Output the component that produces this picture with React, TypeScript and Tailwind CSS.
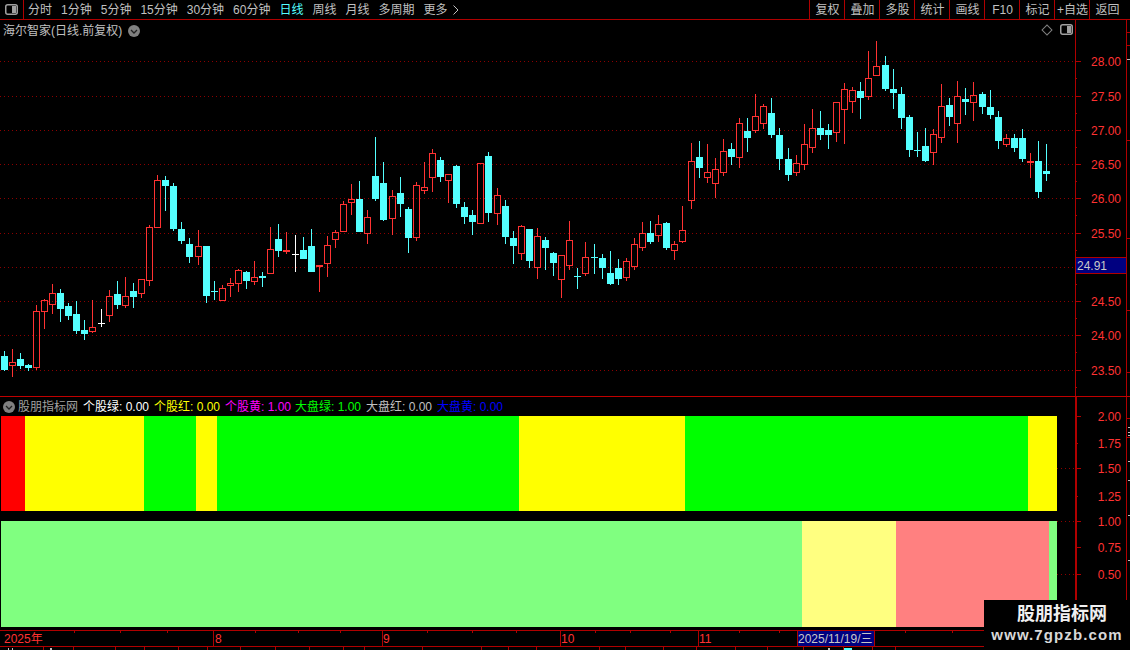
type Candle = [number, number, number, number, number, string];

// x, high, top, bottom, low, colour, all read at 3x from crops of the chart
const groupA: Candle[] = [
  [13, 663, 678, 720, 722, "c"], [37, 657, 697, 707, 741, "r"], [61, 669, 687, 708, 717, "c"], [85, 702, 705, 714, 723, "c"],
  [109, 526, 544, 713, 720, "r"], [133, 507, 511, 545, 597, "r"], [157, 462, 490, 524, 552, "r"], [181, 477, 489, 537, 576, "c"],
  [205, 519, 528, 558, 570, "c"], [229, 513, 552, 603, 612, "c"], [253, 570, 600, 612, 630, "c"], [277, 510, 592, 605, 609, "r"],
  [304, 537, 579, 582, 591, "w"], [328, 480, 499, 557, 576, "r"], [352, 453, 492, 525, 537, "c"], [376, 441, 499, 527, 534, "r"],
  [400, 459, 483, 501, 534, "c"], [424, 447, 448, 491, 504, "r"], [448, 285, 292, 452, 468, "r"], [472, 135, 151, 293, 293, "r"],
  [496, 138, 150, 168, 243, "c"], [520, 159, 168, 297, 303, "c"], [544, 276, 297, 333, 342, "c"], [568, 324, 342, 381, 399, "c"],
  [595, 300, 349, 380, 405, "r"], [619, 348, 348, 498, 519, "c"], [643, 453, 483, 486, 510, "c"], [667, 465, 475, 513, 513, "r"],
  [691, 444, 460, 467, 501, "r"], [715, 418, 421, 461, 486, "r"], [739, 423, 426, 453, 477, "c"], [763, 393, 442, 455, 465, "r"],
  [787, 426, 438, 444, 471, "c"], [811, 291, 358, 431, 432, "r"], [835, 282, 327, 363, 381, "c"],
];

const groupB: Candle[] = [
  [19, 306, 360, 366, 372, "f"], [46, 315, 372, 375, 426, "w"], [70, 321, 360, 387, 387, "c"], [94, 297, 348, 426, 426, "c"],
  [118, 405, 405, 411, 486, "f"], [142, 318, 346, 401, 441, "r"], [166, 300, 307, 329, 354, "r"], [190, 213, 223, 305, 305, "r"],
  [214, 162, 208, 220, 255, "r"], [238, 153, 207, 306, 306, "c"], [262, 240, 262, 311, 342, "r"], [286, 21, 138, 207, 213, "c"],
  [310, 96, 159, 270, 273, "c"], [337, 180, 199, 266, 315, "r"], [361, 141, 189, 222, 261, "c"], [385, 231, 237, 324, 369, "c"],
  [409, 156, 166, 323, 333, "r"], [433, 96, 172, 182, 192, "r"], [457, 57, 70, 143, 186, "r"], [481, 81, 90, 141, 156, "c"],
  [505, 133, 133, 152, 219, "r"], [529, 105, 108, 222, 234, "c"], [553, 216, 231, 261, 282, "c"], [577, 240, 255, 276, 315, "c"],
  [601, 100, 100, 281, 281, "r"], [625, 66, 78, 249, 276, "c"], [652, 174, 196, 251, 285, "r"], [676, 210, 228, 321, 342, "c"],
  [700, 303, 324, 348, 402, "c"], [724, 285, 289, 371, 390, "r"], [748, 297, 297, 393, 414, "c"], [772, 294, 319, 413, 447, "r"],
  [796, 321, 330, 354, 420, "c"], [820, 366, 369, 399, 438, "c"],
];

const groupC: Candle[] = [
  [64, 526, 526, 599, 654, "r"], [88, 423, 481, 557, 570, "r"], [112, 564, 588, 591, 627, "c"], [136, 486, 532, 581, 588, "r"],
  [163, 492, 531, 534, 582, "c"], [187, 522, 534, 564, 597, "c"], [211, 513, 579, 612, 615, "c"], [235, 537, 564, 597, 615, "c"],
  [259, 534, 544, 593, 603, "r"], [283, 474, 493, 560, 570, "r"], [307, 426, 460, 503, 513, "r"], [331, 423, 459, 486, 492, "c"],
  [355, 405, 433, 467, 486, "r"], [379, 426, 429, 504, 510, "c"], [403, 483, 493, 512, 540, "r"], [427, 378, 451, 485, 489, "r"],
  [454, 189, 244, 362, 387, "r"], [478, 183, 231, 264, 294, "c"], [502, 192, 277, 293, 309, "r"], [526, 234, 268, 311, 354, "r"],
  [550, 177, 214, 278, 288, "r"], [574, 189, 207, 231, 255, "c"], [598, 114, 130, 233, 264, "r"], [622, 114, 153, 174, 216, "c"],
  [646, 42, 109, 152, 159, "r"], [670, 72, 79, 131, 147, "r"], [694, 54, 99, 165, 174, "c"], [718, 144, 165, 237, 270, "c"],
  [745, 204, 237, 285, 303, "c"], [769, 225, 250, 278, 288, "r"],
];

const groupD: Candle[] = [
  [13, 282, 343, 404, 420, "r"], [37, 237, 295, 355, 369, "r"], [61, 243, 294, 315, 330, "c"], [85, 282, 300, 315, 357, "c"],
  [109, 216, 217, 310, 336, "r"], [133, 159, 178, 239, 342, "r"], [157, 171, 181, 215, 249, "r"], [181, 156, 183, 204, 267, "c"],
  [205, 63, 145, 200, 210, "r"], [229, 33, 109, 137, 137, "r"], [256, 78, 105, 177, 183, "c"], [280, 117, 177, 189, 237, "c"],
  [304, 171, 192, 264, 297, "c"], [328, 255, 261, 360, 381, "c"], [352, 306, 360, 363, 381, "c"], [376, 294, 348, 393, 396, "c"],
  [400, 297, 313, 368, 405, "r"], [424, 162, 229, 323, 339, "r"], [448, 204, 225, 261, 288, "c"], [472, 153, 199, 281, 339, "r"],
  [496, 174, 207, 216, 255, "c"], [520, 156, 196, 218, 273, "r"], [547, 186, 192, 231, 252, "c"], [571, 180, 231, 255, 267, "c"],
  [595, 243, 261, 333, 357, "c"], [619, 312, 325, 344, 351, "r"], [643, 312, 324, 354, 366, "c"], [667, 297, 324, 387, 396, "c"],
  [691, 369, 393, 399, 444, "f"], [715, 333, 393, 486, 504, "c"], [739, 342, 423, 432, 453, "c"],
];

const RED = "#ff3232";
const CYAN = "#54ffff";
const LINE = "#b00000";
const DOT = "#8c0000";

const priceLevels = [
  ["28.00", 61], ["27.50", 96], ["27.00", 130], ["26.50", 164], ["26.00", 198],
  ["25.50", 233], ["25.00", 267], ["24.50", 301], ["24.00", 335], ["23.50", 370],
] as const;

const indicatorLevels = [
  ["2.00", 416], ["1.75", 443], ["1.50", 468], ["1.25", 496], ["1.00", 521], ["0.75", 547], ["0.50", 574],
] as const;

const topSegments = [
  { w: 24, c: "bg-[#ff0000]" }, { w: 119, c: "bg-[#ffff00]" }, { w: 52, c: "bg-[#00ff00]" }, { w: 21, c: "bg-[#ffff00]" },
  { w: 302, c: "bg-[#00ff00]" }, { w: 166, c: "bg-[#ffff00]" }, { w: 343, c: "bg-[#00ff00]" }, { w: 29, c: "bg-[#ffff00]" },
];

const bottomSegments = [
  { w: 801, c: "bg-[#80ff80]" }, { w: 94, c: "bg-[#ffff80]" }, { w: 153, c: "bg-[#ff8080]" }, { w: 8, c: "bg-[#80ff80]" },
];

const legend = [
  { label: "个股绿", value: "0.00", c: "text-white", w: "w-[71px]" },
  { label: "个股红", value: "0.00", c: "text-[#ffff00]", w: "w-[71px]" },
  { label: "个股黄", value: "1.00", c: "text-[#ff00ff]", w: "w-[70px]" },
  { label: "大盘绿", value: "1.00", c: "text-[#00ff00]", w: "w-[71px]" },
  { label: "大盘红", value: "0.00", c: "text-[#c0c0c0]", w: "w-[71px]" },
  { label: "大盘黄", value: "0.00", c: "text-[#0000ff]", w: "w-[71px]" },
];

function CandleMark({ d, ox, oy }: { d: Candle; ox: number; oy: number }) {
  const [vx, h, t, b, l, kind] = d;
  const x = ox + Math.floor(vx / 3);
  const high = oy + h / 3;
  const top = oy + t / 3;
  const bottom = oy + b / 3;
  const low = oy + l / 3;
  const color = kind === "c" ? CYAN : kind === "w" ? "#ffffff" : RED;
  const outlined = kind === "r";
  const rowTop = Math.round(top);
  const rowH = Math.max(1, Math.round(bottom) - rowTop);
  return (
    <g shapeRendering="crispEdges">
      <rect x={x} y={Math.round(high)} width={1} height={Math.max(0, rowTop - Math.round(high))} fill={color} />
      <rect x={x} y={rowTop + rowH} width={1} height={Math.max(0, Math.round(low) - rowTop - rowH)} fill={color} />
      {outlined ? (
        <rect x={x - 2.5} y={rowTop + 0.5} width={6} height={Math.max(1, rowH - 1)} fill="none" stroke={color} />
      ) : (
        <rect x={x - 3} y={rowTop} width={7} height={rowH} fill={color} />
      )}
    </g>
  );
}

function PriceChart() {
  return (
    <svg width={1075} height={376} viewBox="0 20 1075 376" className="block shrink-0">
      {priceLevels.map(([label, y]) => (
        <line key={label} x1={0} x2={1075} y1={y + 0.5} y2={y + 0.5} stroke={DOT} strokeDasharray="1 3" />
      ))}
      {groupA.map((d) => <CandleMark key={`a${d[0]}`} d={d} ox={0} oy={130} />)}
      {groupB.map((d) => <CandleMark key={`b${d[0]}`} d={d} ox={280} oy={130} />)}
      {groupC.map((d) => <CandleMark key={`c${d[0]}`} d={d} ox={540} oy={80} />)}
      {groupD.map((d) => <CandleMark key={`d${d[0]}`} d={d} ox={800} oy={30} />)}
    </svg>
  );
}

function PriceAxis() {
  const marks = [32, 45, 59, 140, 238, 310, 372];
  return (
    <svg width={55} height={376} viewBox="1075 20 55 376" className="block shrink-0">
      <g shapeRendering="crispEdges">
        <rect x={1075} y={20} width={1} height={376} fill={LINE} />
        <rect x={1126} y={20} width={1} height={376} fill={LINE} />
        {marks.map((y) => <rect key={y} x={1127} y={y} width={3} height={1} fill={y === 59 ? "#c0c0c0" : LINE} />)}
        {priceLevels.map(([label, y]) => (
          <g key={label}>
            <rect x={1075} y={y} width={6} height={1} fill={LINE} />
            <rect x={1075} y={y + 17} width={2} height={1} fill={LINE} />
          </g>
        ))}
      </g>
      {priceLevels.filter(([label]) => label !== "25.00").map(([label, y]) => (
        <text key={label} x={1121} y={y + 5} textAnchor="end" fontSize={12} fill={RED}>{label}</text>
      ))}
      <rect x={1075.5} y={257.5} width={51} height={16} fill="#000080" stroke={LINE} shapeRendering="crispEdges" />
      <text x={1077} y={270} fontSize={12} fill="#c8c8c8">24.91</text>
    </svg>
  );
}

function IndicatorAxis() {
  return (
    <svg width={73} height={233} viewBox="1057 397 73 233" className="block shrink-0">
      {[468, 521, 574].map((y) => (
        <line key={y} x1={1057} x2={1075} y1={y + 0.5} y2={y + 0.5} stroke={DOT} strokeDasharray="1 3" />
      ))}
      <g shapeRendering="crispEdges">
        <rect x={1075} y={397} width={2} height={233} fill={LINE} />
        <rect x={1126} y={397} width={1} height={233} fill={LINE} />
        <rect x={1127} y={418} width={3} height={1} fill={LINE} />
        <rect x={1127} y={437} width={3} height={1} fill={LINE} />
        {[427, 432, 435, 461, 480, 515, 560, 600].map((y) => <rect key={y} x={1128} y={y} width={2} height={1} fill="#c0c0c0" />)}
        {indicatorLevels.map(([label, y]) => (
          <rect key={label} x={1077} y={y} width={label === "1.75" || label === "1.25" ? 1 : 4} height={1} fill={LINE} />
        ))}
      </g>
      {indicatorLevels.map(([label, y]) => (
        <text key={label} x={1121} y={y + 5} textAnchor="end" fontSize={12} fill={RED}>{label}</text>
      ))}
    </svg>
  );
}

function Timeline() {
  const upper = [74, 120, 167, 255, 298, 340, 427, 472, 516, 595, 630, 670, 739, 779, 828, 905, 952, 1000];
  const lower = [43, 73, 115, 144, 178, 207, 240, 275, 309, 343, 364, 422, 481, 508, 536, 599, 625, 663, 696, 735, 767, 803, 843, 872, 895];
  const dividers = [213, 382, 560, 698];
  return (
    <svg width={1130} height={20} viewBox="0 630 1130 20" className="block shrink-0">
      <g shapeRendering="crispEdges">
        <rect x={0} y={630} width={1130} height={1} fill={LINE} />
        <rect x={0} y={646} width={1130} height={1} fill={LINE} />
        {upper.map((x) => <rect key={x} x={x} y={631} width={1} height={2} fill={LINE} />)}
        {lower.map((x) => <rect key={x} x={x} y={647} width={1} height={3} fill={LINE} />)}
        {dividers.map((x) => <rect key={x} x={x} y={631} width={1} height={15} fill={LINE} />)}
        <rect x={797.5} y={630.5} width={77} height={16} fill="#000080" stroke={LINE} />
        <rect x={828} y={648} width={2} height={2} fill="#c0c0c0" />
        <rect x={844} y={648} width={8} height={2} fill={CYAN} />
        <rect x={8} y={648} width={1} height={2} fill="#c0c0c0" />
        <rect x={12} y={648} width={1} height={2} fill="#c0c0c0" />
        <rect x={50} y={648} width={2} height={2} fill="#c0c0c0" />
      </g>
      <text x={4} y={643} fontSize={12} fill={RED}>2025年</text>
      <text x={215} y={643} fontSize={12} fill={RED}>8</text>
      <text x={383} y={643} fontSize={12} fill={RED}>9</text>
      <text x={561} y={643} fontSize={12} fill={RED}>10</text>
      <text x={699} y={643} fontSize={12} fill={RED}>11</text>
      <text x={798} y={643} fontSize={12} fill="#c8c8c8">2025/11/19/三</text>
    </svg>
  );
}

function PanelIcon({ className }: { className?: string }) {
  return (
    <svg width={13} height={11} viewBox="0 0 13 11" className={className}>
      <rect x={0.75} y={0.75} width={11.5} height={9.5} rx={2} fill="none" stroke="#a0a0a0" strokeWidth={1.5} />
      <rect x={7} y={2} width={4} height={7} fill="#a0a0a0" />
    </svg>
  );
}

function RoundChevron() {
  return (
    <svg width={12} height={12} viewBox="0 0 12 12" className="block shrink-0">
      <circle cx={6} cy={6} r={6} fill="#808080" />
      <path d="M3 5 L6 8 L9 5" fill="none" stroke="#202020" strokeWidth={1.3} />
    </svg>
  );
}

function Toolbar() {
  const periods = ["分时", "1分钟", "5分钟", "15分钟", "30分钟", "60分钟", "日线", "周线", "月线", "多周期"];
  const actions = ["复权", "叠加", "多股", "统计", "画线", "F10", "标记", "+自选", "返回"];
  return (
    <div className="flex h-5 shrink-0 items-stretch border-b border-[#b00000] text-[12px] text-[#c0c0c0]">
      <div className="flex w-6 items-center justify-center border-r border-[#b00000]">
        <PanelIcon />
      </div>
      <div className="flex flex-1 items-center gap-[9px] pl-1">
        {periods.map((p) => (
          <span key={p} className={p === "日线" ? "text-[#54ffff]" : ""}>{p}</span>
        ))}
        <span className="flex items-center gap-[5px]">
          更多
          <svg width={6} height={10} viewBox="0 0 6 10">
            <path d="M0.5 0.5 L5 5 L0.5 9.5" fill="none" stroke="#c0c0c0" />
          </svg>
        </span>
      </div>
      <div className="flex">
        {actions.map((a) => (
          <span key={a} className="flex w-[35px] items-center justify-center whitespace-nowrap border-l border-[#b00000] pl-px">{a}</span>
        ))}
        <span className="w-[6px]" />
      </div>
    </div>
  );
}

function PricePanel() {
  return (
    <div className="relative flex h-[376px] shrink-0">
      <PriceChart />
      <PriceAxis />
      <div className="absolute left-[3px] top-[2px] flex items-center gap-[6px] text-[12px] text-[#c0c0c0]">
        <span>海尔智家(日线.前复权)</span>
        <RoundChevron />
      </div>
      <div className="absolute left-[1043px] top-[4px] flex items-center gap-[9px]">
        <span className="h-2 w-2 rotate-45 border border-[#808080]" />
        <PanelIcon />
      </div>
    </div>
  );
}

function IndicatorPanel() {
  return (
    <div className="flex h-[234px] shrink-0 border-t border-[#c00000]">
      <div className="flex w-[1057px] shrink-0 flex-col">
        <div className="flex h-[19px] items-center pl-[3px] text-[12px]">
          <RoundChevron />
          <span className="ml-[3px] w-[65px] text-[#a0a0a0]">股朋指标网</span>
          {legend.map((item) => (
            <span key={item.label} className={`${item.w} whitespace-nowrap ${item.c}`}>
              {item.label}: {item.value}
            </span>
          ))}
        </div>
        <div className="ml-px flex h-[95px]">
          {topSegments.map((s, i) => (
            <div key={i} className={s.c} style={{ width: s.w }} />
          ))}
        </div>
        <div className="ml-px mt-[10px] flex h-[106px]">
          {bottomSegments.map((s, i) => (
            <div key={i} className={s.c} style={{ width: s.w }} />
          ))}
        </div>
      </div>
      <IndicatorAxis />
    </div>
  );
}

export default function App() {
  return (
    <div className="relative flex h-[650px] w-[1130px] flex-col overflow-hidden bg-black font-['Liberation_Sans','Noto_Sans_CJK_SC',sans-serif]">
      <Toolbar />
      <PricePanel />
      <IndicatorPanel />
      <Timeline />
      <div className="absolute bottom-0 right-0 flex h-[50px] w-[146px] flex-col items-center bg-black pt-[2px]">
        <span className="ml-[10px] text-[18px] font-bold leading-[24px] text-[#f0f0f0]">股朋指标网</span>
        <span className="text-[15px] font-bold leading-[18px] tracking-[1.1px] text-[#d8d8d8]">www.7gpzb.com</span>
      </div>
    </div>
  );
}
